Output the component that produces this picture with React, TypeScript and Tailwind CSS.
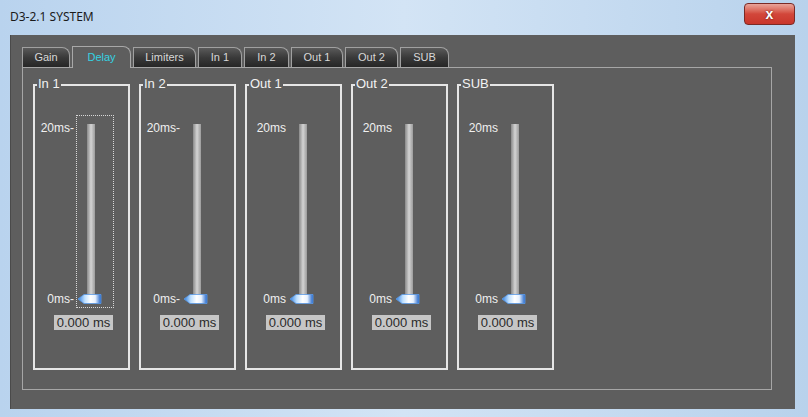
import React from "react";

const tabs = ["Gain", "Delay", "Limiters", "In 1", "In 2", "Out 1", "Out 2", "SUB"];
const tabW = [48, 59, 63, 44, 45, 52, 53, 49];

type G = { title: string; dash: boolean; focus?: boolean };
const groups: G[] = [
  { title: "In 1", dash: true, focus: true },
  { title: "In 2", dash: true },
  { title: "Out 1", dash: false },
  { title: "Out 2", dash: false },
  { title: "SUB", dash: false },
];

function Thumb() {
  return (
    <svg width="24" height="10" viewBox="0 0 24 10" className="absolute left-[1px] top-[178px]">
      <defs>
        <linearGradient id="tg" x1="0" y1="0" x2="1" y2="0">
          <stop offset="0" stopColor="#2f7fe0" />
          <stop offset="0.3" stopColor="#bfe0ff" />
          <stop offset="0.55" stopColor="#ffffff" />
          <stop offset="0.75" stopColor="#e8f2ff" />
          <stop offset="1" stopColor="#1f63c8" />
        </linearGradient>
      </defs>
      <polygon points="0,5 6,0.5 23,0.5 23,9.5 6,9.5" fill="url(#tg)" stroke="#5a9be8" strokeWidth="0.8" />
    </svg>
  );
}

function Group({ g }: { g: G }) {
  return (
    <div className="relative w-[97px] h-[286px] border-2 border-[#e6e6e6] shrink-0">
      <div className="absolute left-[2px] top-[-10px] bg-[#5e5e5e] px-[1px] text-[13px] leading-[16px] text-[#f2f2f2]">
        {g.title}
      </div>
      <div className="flex pt-[29px] pl-[2px]">
        <div className="w-[39px] h-[193px] flex flex-col justify-between items-end pr-[2px] pt-[6px] pb-[2px] text-[12px] leading-[14px] text-[#f0f0f0]">
          <span>{g.dash ? "20ms-" : "20ms"}</span>
          <span>{g.dash ? "0ms-" : "0ms"}</span>
        </div>
        <div
          className={
            "relative w-[38px] h-[193px] " +
            (g.focus ? "border border-dotted border-[#d8d8d8]" : "border border-transparent")
          }
        >
          <div className="absolute left-[10px] top-[8px] w-[8px] h-[173px] bg-gradient-to-r from-[#8a8a8a] via-[#d4d4d4] to-[#9c9c9c]" />
          <Thumb />
        </div>
      </div>
      <div className="flex justify-center pl-[4px] mt-[7px]">
        <div className="bg-[#c6c6c6] text-[#2a2a2a] text-[13px] leading-[15px] px-[3px]">0.000 ms</div>
      </div>
    </div>
  );
}

export default function App() {
  return (
    <div
      className="w-[808px] h-[417px] flex flex-col bg-gradient-to-r from-[#b9d3ee] via-[#d3e4f5] to-[#b8d2ec] overflow-hidden"
      style={{ fontFamily: '"Liberation Sans", Arial, sans-serif' }}
    >
      <div className="h-[35px] flex items-start justify-between pl-[10px] pr-[13px]">
        <div
          className="text-[12px] text-[#1a1a1a] mt-[8px]"
          style={{ fontFamily: '"Noto Sans", "Open Sans", sans-serif' }}
        >
          D3-2.1 SYSTEM
        </div>
        <div className="mt-[3px] w-[51px] h-[22px] rounded-[4px] border border-[#7a2a25] bg-gradient-to-b from-[#e8a49a] via-[#d2463a] to-[#c9362b] flex items-center justify-center">
          <span className="text-white font-bold text-[14px] leading-none" style={{ textShadow: "0 0 2px #5a1510" }}>
            x
          </span>
        </div>
      </div>
      <div className="ml-[10px] mr-[13px] h-[374px] bg-[#5e5e5e] border-l border-[#4a4a4a] pl-[11px] pt-[11px]">
        <div className="flex items-end h-[21px] gap-[2px] text-[11px]">
          {tabs.map((t, i) =>
            i === 1 ? (
              <div
                key={t}
                style={{ width: tabW[i] }}
                className="h-[22px] -mb-[1px] relative z-10 bg-[#5e5e5e] border border-b-0 border-[#a8a8a8] rounded-tr-[8px] flex items-center justify-center text-[#34d2e2]"
              >
                {t}
              </div>
            ) : (
              <div
                key={t}
                style={{ width: tabW[i] }}
                className="h-[20px] bg-gradient-to-b from-[#5a5a5a] via-[#3a3a3a] to-[#262626] border border-b-0 border-[#a0a0a0] rounded-tr-[8px] flex items-center justify-center text-[#d8d8d8]"
              >
                {t}
              </div>
            )
          )}
        </div>
        <div className="w-[750px] h-[323px] border border-[#a6a6a6] pl-[10px] pt-[16px]">
          <div className="flex gap-[9px]">
            {groups.map((g) => (
              <Group key={g.title} g={g} />
            ))}
          </div>
        </div>
      </div>
    </div>
  );
}
